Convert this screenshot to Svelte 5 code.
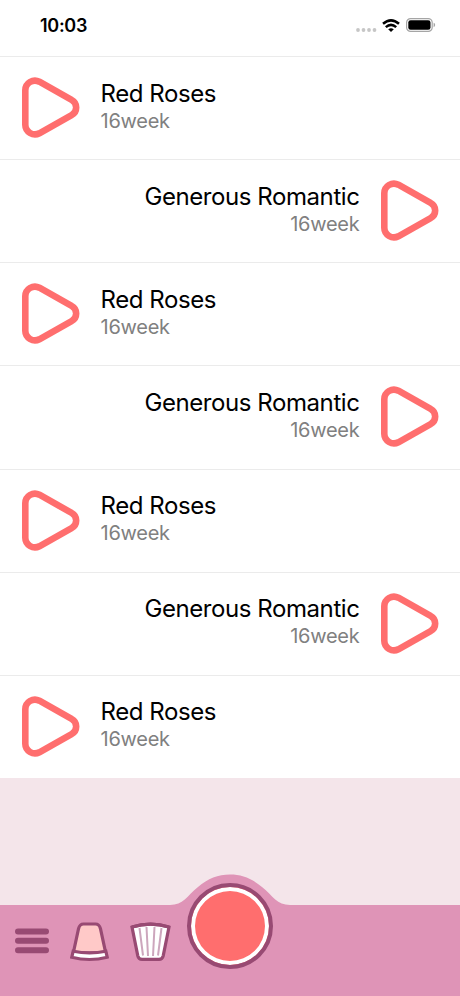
<script>
    const songs = [
        { id: 1, title: 'Red Roses', age: '16week' },
        { id: 2, title: 'Generous Romantic', age: '16week' },
        { id: 3, title: 'Red Roses', age: '16week' },
        { id: 4, title: 'Generous Romantic', age: '16week' },
        { id: 5, title: 'Red Roses', age: '16week' },
        { id: 6, title: 'Generous Romantic', age: '16week' },
        { id: 7, title: 'Red Roses', age: '16week' }
    ];
</script>

<div class="screen">
    <header class="status">
        <span class="time">10:03</span>
        <div class="indicators">
            <svg class="signal" width="21" height="4" viewBox="0 0 21 4" fill="#c6c6c6">
                <circle cx="2" cy="2" r="1.9" />
                <circle cx="7.5" cy="2" r="1.9" />
                <circle cx="13" cy="2" r="1.9" />
                <circle cx="18.5" cy="2" r="1.9" />
            </svg>
            <svg class="wifi" width="18" height="13" viewBox="0 0 18 13" fill="none" stroke="#000" stroke-width="2.5">
                <path d="M1 4.8Q9 -2.1 17 4.8" />
                <path d="M3.8 8.1Q9 3.6 14.2 8.1" />
                <path d="M6.2 10.3Q9 8 11.8 10.3L9 13Z" fill="#000" stroke="none" />
            </svg>
            <svg class="battery" width="30" height="14" viewBox="0 0 30 14">
                <rect x="0.6" y="0.6" width="25.6" height="12.8" rx="4" fill="#fff" stroke="#a5a5a5" stroke-width="1.2" />
                <rect x="2.3" y="2.3" width="22.2" height="9.4" rx="2.3" />
                <path d="M27.6 4.8Q29.2 5.4 29.2 7T27.6 9.2Z" fill="#a5a5a5" />
            </svg>
        </div>
    </header>

    <ul class="songs">
        {#each songs as song, i (song.id)}
            <li class:right={i % 2 === 1}>
                <button class="play" aria-label="Play">
                    <svg width="58" height="61" viewBox="0 0 58 61">
                        <path d="M3.3 13.2A9.7 9.7 0 0 1 17.4 4.7L49.6 22.9A8.6 8.6 0 0 1 49.6 38.1L17.4 56.3A9.7 9.7 0 0 1 3.3 47.8Z" />
                    </svg>
                </button>
                <div class="info">
                    <div class="title">{song.title}</div>
                    <div class="age">{song.age}</div>
                </div>
            </li>
        {/each}
    </ul>

    <footer class="toolbar">
        <svg class="bump" width="120" height="32" viewBox="0 0 120 32">
            <path d="M0 31C13 31 17 22 28 13C38 4.5 48 0.5 60 0.5S82 4.5 92 13C103 22 107 31 120 31V32H0Z" />
        </svg>
        <div class="tools">
            <button class="menu" aria-label="Menu">
                <svg width="34" height="26" viewBox="0 0 34 26" stroke="#984a73" stroke-width="6" stroke-linecap="round">
                    <path d="M3 3.4H31M3 12.8H31M3 22.2H31" />
                </svg>
            </button>
            <button class="pot" aria-label="Pot">
                <svg width="40" height="40" viewBox="0 0 40 40" stroke="#984a73" stroke-width="3.2">
                    <path d="M3.5 30L8.6 6.5Q9.8 2 13.5 2H25.5Q29.2 2 30.4 6.5L35.5 30Q20 32 3.5 30Z" fill="#ffc9c8" />
                    <path d="M3.2 29.2Q19.5 32.6 35.8 29.2L37.2 35.2Q19.5 39.8 1.8 35.2Z" fill="#fff" />
                </svg>
            </button>
            <button class="trash" aria-label="Trash">
                <svg width="42" height="40" viewBox="0 0 42 40" fill="none" stroke="#984a73" stroke-width="3.2">
                    <path d="M2 5Q20.5 -0.6 39 5L38.3 8.5L33.2 33.8Q32.4 37.3 29 37.3H12Q8.6 37.3 7.8 33.8L2.7 8.5Z" fill="#fff" />
                    <path d="M9.5 6L13 33.5M16.5 5L18 34M24.5 5L23 34M31.5 6L28 33.5" stroke="#cda6bd" stroke-width="2" />
                    <path d="M2 5Q20.5 -0.6 39 5" />
                </svg>
            </button>
        </div>
        <button class="record" aria-label="Record"></button>
    </footer>
</div>

<style>
    :global(body) {
        margin: 0;
        background: #f4e5ea;
        font-family: Inter, "Liberation Sans", sans-serif;
    }
    .screen {
        display: flex;
        flex-direction: column;
        height: 996px;
        overflow: hidden;
        background: #f4e5ea;
    }
    .status {
        display: flex;
        justify-content: space-between;
        box-sizing: border-box;
        height: 56px;
        padding: 15px 24px 0 40px;
        background: #fff;
    }
    .time {
        font-size: 18px;
        line-height: 22px;
        font-weight: 600;
        letter-spacing: -0.3px;
    }
    .indicators {
        display: flex;
        align-items: flex-start;
    }
    .signal {
        margin: 13px 5px 0 0;
    }
    .wifi {
        margin: 4px 6px 0 0;
    }
    .battery {
        margin-top: 3px;
    }
    .songs {
        list-style: none;
        margin: 0;
        padding: 0;
        background: #fff;
    }
    li {
        display: flex;
        gap: 21px;
        box-sizing: border-box;
        height: 103.15px;
        padding: 20px 21.5px 0;
        border-top: 1px solid #ebebeb;
    }
    .right {
        flex-direction: row-reverse;
        text-align: right;
    }
    button {
        display: block;
        padding: 0;
        border: 0;
        background: none;
    }
    svg {
        display: block;
    }
    .play {
        height: 61px;
    }
    .play path {
        fill: none;
        stroke: #ff6e6e;
        stroke-width: 6.6;
    }
    .title {
        margin-top: 1.6px;
        font-size: 24px;
        line-height: 30px;
        letter-spacing: -0.42px;
        color: #000;
    }
    .age {
        font-size: 20px;
        line-height: 25px;
        letter-spacing: -0.25px;
        color: #808080;
    }
    .toolbar {
        position: relative;
        height: 91px;
        margin-top: auto;
        background: #df94b7;
    }
    .bump {
        position: absolute;
        top: -31px;
        left: 170px;
        fill: #df94b7;
    }
    .tools {
        display: flex;
        align-items: flex-start;
        padding: 17px 0 0 15px;
    }
    .menu {
        margin: 6px 21px 0 0;
    }
    .pot {
        margin-right: 20px;
    }
    .record {
        position: absolute;
        top: -22px;
        left: 187px;
        box-sizing: border-box;
        width: 86px;
        height: 86px;
        border: 4px solid #984a73;
        border-radius: 50%;
        background: #ff6e6e;
        box-shadow: inset 0 0 0 4px #fff;
    }
</style>
